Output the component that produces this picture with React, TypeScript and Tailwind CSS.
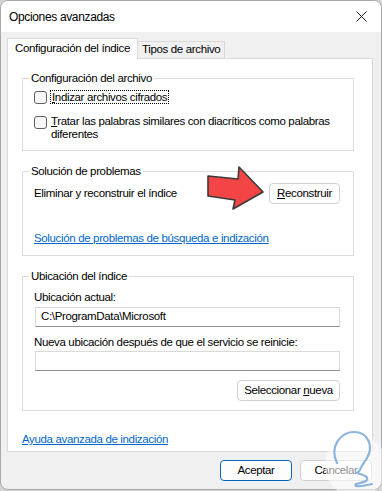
import React from "react";

const font = { fontFamily: '"Liberation Sans", Arial, sans-serif' };

function Checkbox() {
  return <span className="mt-[1px] h-[13px] w-[13px] shrink-0 rounded-[3px] border border-[#5f5f5f] bg-[#f7f7f7]" />;
}

function Button({ children, className }: { children: React.ReactNode; className?: string }) {
  return (
    <button
      className={`flex h-[21px] items-center justify-center rounded-[4px] border bg-[#fdfdfd] text-black ${className ?? ""}`}
    >
      {children}
    </button>
  );
}

function Group({ title, className, children }: { title: string; className?: string; children: React.ReactNode }) {
  return (
    <fieldset className={`border border-[#dcdcdc] pl-[11px] pr-[13px] ${className ?? ""}`}>
      <legend className="-ml-[5px] px-[2px] leading-[14px]">{title}</legend>
      {children}
    </fieldset>
  );
}

export default function App() {
  return (
    <div
      className="relative h-[491px] w-[382px] overflow-hidden bg-[#d4d4d4] text-[11.5px] tracking-[-0.35px] text-black"
      style={font}
    >
      <div className="flex h-[490px] flex-col overflow-hidden rounded-lg border border-[#a8a8a8] bg-[#f0f0f0]">
        {/* title bar */}
        <div className="flex h-[31px] shrink-0 items-center justify-between bg-white pl-[8px] pr-[10px]">
          <span className="text-[12px]">Opciones avanzadas</span>
          <svg width="11" height="11" viewBox="0 0 11 11" className="mr-[4px]">
            <path d="M0.5 0.5 L10.5 10.5 M10.5 0.5 L0.5 10.5" stroke="#1a1a1a" strokeWidth="1" />
          </svg>
        </div>

        {/* tabs */}
        <div className="flex items-end px-[6px] pt-[6px]">
          <div className="relative z-10 -mb-[1px] flex h-[21px] items-center border border-b-0 border-[#d9d9d9] bg-white px-[7px]">
            Configuración del índice
          </div>
          <div className="flex h-[17px] items-center border border-b-0 border-l-0 border-[#d9d9d9] bg-[#f0f0f0] px-[4px]">
            Tipos de archivo
          </div>
        </div>

        {/* panel */}
        <div className="ml-[6px] mr-[8px] flex h-[394px] flex-col border border-[#d9d9d9] bg-white pl-[14px] pr-[18px] pt-[12px]">
          <Group title="Configuración del archivo" className="pb-[9px]">
            <div className="mt-[5px] flex items-start gap-[3px]">
              <Checkbox />
              <span className="border border-dotted border-black px-[1px] leading-[12px]">
                <u>I</u>ndizar archivos cifrados
              </span>
            </div>
            <div className="mt-[11px] flex items-start gap-[4px]">
              <Checkbox />
              <span className="leading-[13px]">
                <u>T</u>ratar las palabras similares con diacríticos como palabras diferentes
              </span>
            </div>
          </Group>

          <Group title="Solución de problemas" className="mt-[13px] pb-[10px]">
            <div className="mt-[5px] flex items-center justify-between">
              <span>Eliminar y reconstruir el índice</span>
              <Button className="w-[71px] border-[#d0d0d0]">
                <span>
                  <u>R</u>econstruir
                </span>
              </Button>
            </div>
            <div className="mt-[27px] leading-[14px] text-[#0066cc] underline">
              Solución de problemas de búsqueda e indización
            </div>
          </Group>

          <Group title="Ubicación del índice" className="mt-[13px] pb-[9px]">
            <div className="mt-[7px] leading-[14px]">Ubicación actual:</div>
            <div className="mt-[3px] ml-[1px] flex h-[20px] items-center border border-[#dadada] border-b-[#8f8f8f] bg-white px-[5px]">
              C:\ProgramData\Microsoft
            </div>
            <div className="mt-[8px] leading-[14px]">Nueva ubicación después de que el servicio se reinicie:</div>
            <div className="mt-[2px] ml-[1px] h-[20px] border border-[#dadada] border-b-[#8f8f8f] bg-white" />
            <div className="mt-[9px] flex justify-end">
              <Button className="w-[103px] border-[#d0d0d0]">
                <span>
                  Seleccionar <u>n</u>ueva
                </span>
              </Button>
            </div>
          </Group>

          <div className="mt-[21px] leading-[14px] text-[#0066cc] underline">Ayuda avanzada de indización</div>
        </div>

        {/* bottom buttons */}
        <div className="mt-[8px] flex justify-end gap-[8px] pr-[9px]">
          <Button className="w-[72px] border-[#0067c0]">Aceptar</Button>
          <Button className="w-[72px] border-[#d0d0d0]">Cancelar</Button>
        </div>
      </div>

      {/* red arrow annotation */}
      <svg className="pointer-events-none absolute left-0 top-0" width="382" height="491">
        <polygon
          points="208,176 238,179 239,167 263,192 233,209 235,200 208,196"
          fill="#f34545"
          stroke="#3a3a3a"
          strokeWidth="1.6"
          strokeLinejoin="round"
        />
      </svg>

      {/* watermark */}
      <svg className="pointer-events-none absolute left-0 top-0" width="382" height="491">
        <circle cx="356" cy="466" r="31" fill="#ffffff" opacity="0.55" />
        <path
          d="M337 463 C329 446 341 432 354 432 C368 432 374 446 367 458 C364 463 361 466 360 470 L357 473 C364 475 370 477 366 481 C361 484 353 483 356 486 C360 487 366 485 372 484"
          fill="none"
          stroke="#6fa3d8"
          strokeWidth="2.2"
          strokeLinecap="round"
          opacity="0.8"
        />
      </svg>
    </div>
  );
}
